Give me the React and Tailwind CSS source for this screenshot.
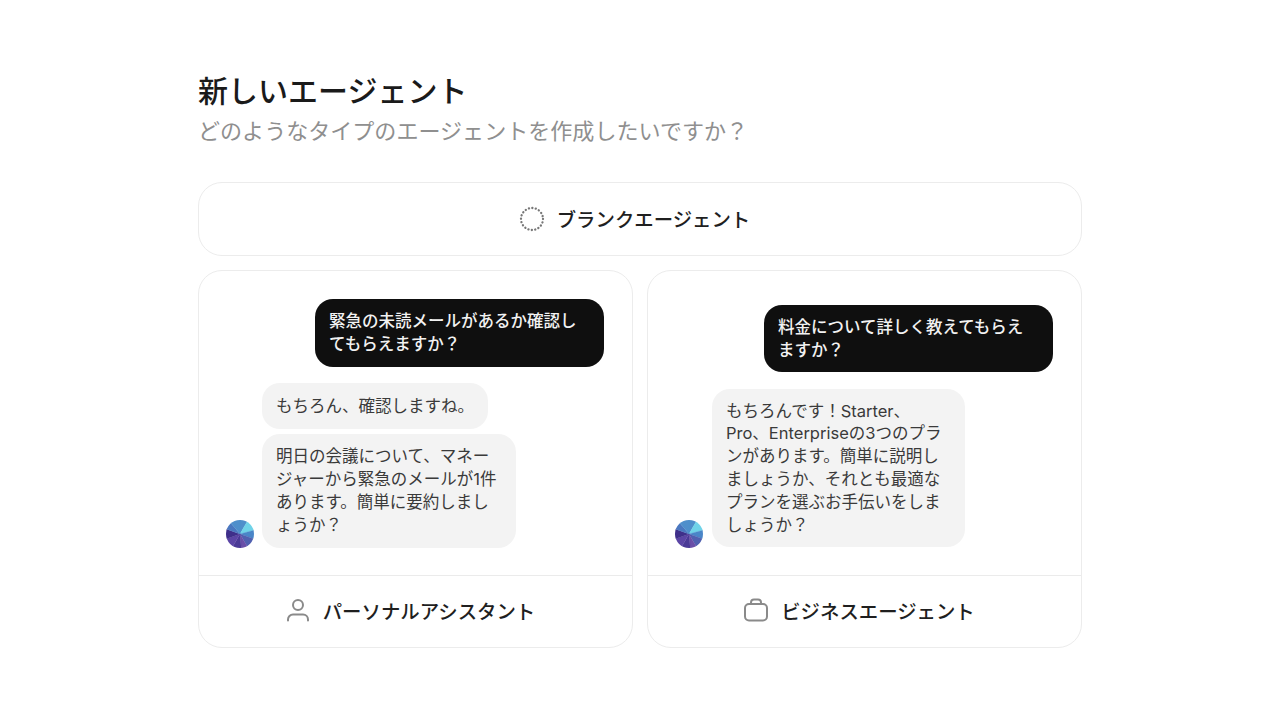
function Avatar() {
  const wedges = [
    [0, 30, "#4f8fcb"], [30, 75, "#6fd3e8"], [75, 110, "#4a86c8"], [110, 150, "#5060b0"], [150, 175, "#6a4fa8"],
    [175, 210, "#4a3a96"], [210, 250, "#5b45a5"], [250, 290, "#3f2f8a"], [290, 320, "#4a78c0"], [320, 360, "#4f8fcb"],
  ];
  const pt = (deg) => {
    const a = ((deg - 90) * Math.PI) / 180;
    return `${14 + 22 * Math.cos(a)} ${14 + 22 * Math.sin(a)}`;
  };
  return (
    <svg width="28" height="28" viewBox="0 0 28 28" className="shrink-0">
      <defs>
        <clipPath id="av"><circle cx="14" cy="14" r="14" /></clipPath>
      </defs>
      <g clipPath="url(#av)">
        {wedges.map(([a, b, c]) => (
          <path key={a} d={`M14 14L${pt(a)}L${pt(b)}Z`} fill={c} stroke={c} strokeWidth="0.3" />
        ))}
      </g>
    </svg>
  );
}

function UserBubble({ children, className }) {
  return (
    <div className={"self-end w-[289px] rounded-[18px] bg-[#0f0f0f] px-[14px] text-[16.5px] leading-[22.8px] font-medium text-[#f2f2f2] whitespace-nowrap " + className}>
      {children}
    </div>
  );
}

function BotBubble({ children, className }) {
  return (
    <div className={"rounded-[18px] bg-[#f3f3f3] px-[14px] text-[16.5px] leading-[22.8px] text-[#3a3a3a] whitespace-nowrap " + className}>
      {children}
    </div>
  );
}

function Card({ children, icon, label }) {
  return (
    <div className="flex flex-1 flex-col rounded-[24px] border border-[#ececec] bg-white">
      <div className="flex flex-1 flex-col justify-end pl-[27px] pr-[28px] pb-[27px]">{children}</div>
      <div className="flex h-[72px] items-center justify-center gap-[13px] border-t border-[#ebebeb] pr-[10px] text-[19.4px] font-medium text-[#1f1f1f]">
        {icon}
        <span className="pt-[3px]">{label}</span>
      </div>
    </div>
  );
}

export default function App() {
  return (
    <div className="flex h-[720px] w-[1280px] justify-center bg-white pt-[71px] font-['Inter','Noto_Sans_CJK_JP',sans-serif]">
      <div className="flex h-[577px] w-[884px] flex-col">
        <h1 className="text-[30px] leading-[40px] font-medium text-[#1a1a1a]">新しいエージェント</h1>
        <p className="mt-[4px] text-[22.06px] leading-[32px] text-[#8f8f8f]">どのようなタイプのエージェントを作成したいですか？</p>
        <div className="mt-[35px] flex h-[74px] items-center justify-center gap-[12px] rounded-[24px] border border-[#ececec] pr-[11px] text-[19.4px] font-medium text-[#1f1f1f]">
          <svg width="26" height="26" viewBox="0 0 26 26" fill="none">
            <circle cx="13" cy="13" r="11" stroke="#777777" strokeWidth="2.3" strokeLinecap="round" strokeDasharray="0.1 3.355" />
          </svg>
          <span className="pt-[3px]">ブランクエージェント</span>
        </div>
        <div className="mt-[14px] flex flex-1 gap-[14px]">
          <Card
            label="パーソナルアシスタント"
            icon={
              <svg width="24" height="24" viewBox="0 0 24 24" fill="none" stroke="#8a8a8a" strokeWidth="2" className="mb-[3px]">
                <circle cx="12" cy="7" r="5" />
                <path d="M2 22.5v-1a5 5 0 0 1 5-5h10a5 5 0 0 1 5 5v1" strokeLinecap="round" />
              </svg>
            }
          >
            <UserBubble className="py-[11.4px]">緊急の未読メールがあるか確認し<br />てもらえますか？</UserBubble>
            <div className="mt-[16px] flex items-end gap-[8px]">
              <Avatar />
              <div className="flex flex-col items-start gap-[5px]">
                <BotBubble className="w-[226px] py-[11.4px]">もちろん、確認しますね。</BotBubble>
                <BotBubble className="w-[254px] py-[11.4px]">明日の会議について、マネー<br />ジャーから緊急のメールが1件<br />あります。簡単に要約しまし<br />ょうか？</BotBubble>
              </div>
            </div>
          </Card>
          <Card
            label="ビジネスエージェント"
            icon={
              <svg width="24" height="24" viewBox="0 0 24 24" fill="none" stroke="#8a8a8a" strokeWidth="2" className="mb-[3px]">
                <rect x="1" y="6" width="22" height="16.5" rx="4" />
                <path d="M7 6V4.5a3 3 0 0 1 3-3h4a3 3 0 0 1 3 3V6" />
              </svg>
            }
          >
            <UserBubble className="py-[10.7px]">料金について詳しく教えてもらえ<br />ますか？</UserBubble>
            <div className="mt-[17px] flex items-end gap-[9px]">
              <Avatar />
              <BotBubble className="mb-[1px] w-[253px] py-[10.6px]">もちろんです！Starter、<br />Pro、Enterpriseの3つのプラ<br />ンがあります。簡単に説明し<br />ましょうか、それとも最適な<br />プランを選ぶお手伝いをしま<br />しょうか？</BotBubble>
            </div>
          </Card>
        </div>
      </div>
    </div>
  );
}
